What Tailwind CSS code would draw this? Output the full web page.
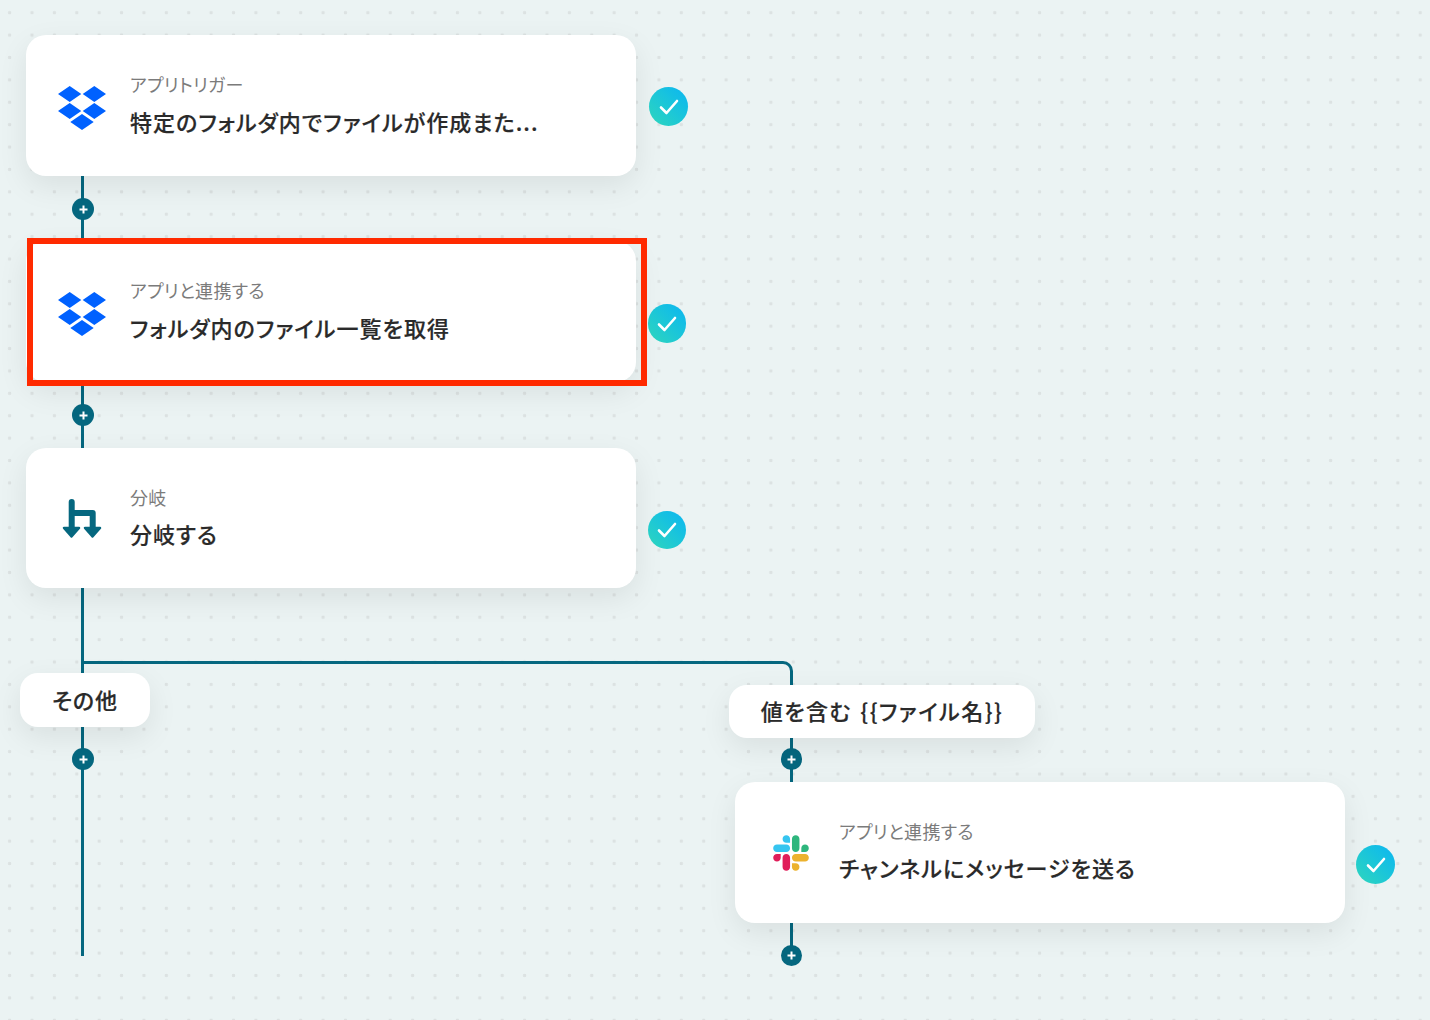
<!DOCTYPE html>
<html lang="ja">
<head>
<meta charset="utf-8">
<title>Flow</title>
<script src="https://cdn.jsdelivr.net/npm/@tailwindcss/browser@4"></script>
</head>
<body>
<main class="relative w-[1430px] h-[1020px] overflow-hidden bg-[#ebf3f3] bg-[radial-gradient(circle,#dce2e2_1.6px,transparent_2px)] bg-[size:22.4px_22.4px] bg-[position:-1.6px_1.5px] font-['Noto_Sans_CJK_JP','Noto_Sans',sans-serif] [font-feature-settings:'palt']">

  <!-- connectors -->
  <div class="absolute left-[81px] top-[176px] w-[3px] h-[62px] bg-[#05677f]"></div>
  <div class="absolute left-[81px] top-[386px] w-[3px] h-[62px] bg-[#05677f]"></div>
  <div class="absolute left-[81px] top-[588px] w-[3px] h-[368px] bg-[#05677f]"></div>
  <div class="absolute left-[83px] top-[661px] w-[710px] h-[30px] border-t-[3px] border-r-[3px] border-[#05677f] rounded-tr-[10px]"></div>
  <div class="absolute left-[790px] top-[738px] w-[3px] h-[44px] bg-[#05677f]"></div>
  <div class="absolute left-[790px] top-[923px] w-[3px] h-[24px] bg-[#05677f]"></div>

  <!-- plus buttons -->
  <div class="absolute left-[72px] top-[198px] w-[22px] h-[22px] rounded-full bg-[#05677f] flex items-center justify-center"><svg width="11" height="11" viewBox="0 0 11 11"><path d="M5.500 1.500v8M1.500 5.500h8" stroke="#fff" stroke-width="2"/></svg></div>
  <div class="absolute left-[72px] top-[404px] w-[22px] h-[22px] rounded-full bg-[#05677f] flex items-center justify-center"><svg width="11" height="11" viewBox="0 0 11 11"><path d="M5.500 1.500v8M1.500 5.500h8" stroke="#fff" stroke-width="2"/></svg></div>
  <div class="absolute left-[72px] top-[748px] w-[22px] h-[22px] rounded-full bg-[#05677f] flex items-center justify-center"><svg width="11" height="11" viewBox="0 0 11 11"><path d="M5.500 1.500v8M1.500 5.500h8" stroke="#fff" stroke-width="2"/></svg></div>
  <div class="absolute left-[781px] top-[748px] w-[21px] h-[22px] rounded-full bg-[#05677f] flex items-center justify-center"><svg width="11" height="11" viewBox="0 0 11 11"><path d="M5.500 1.500v8M1.500 5.500h8" stroke="#fff" stroke-width="2"/></svg></div>
  <div class="absolute left-[781px] top-[945px] w-[21px] h-[21px] rounded-full bg-[#05677f] flex items-center justify-center"><svg width="11" height="11" viewBox="0 0 11 11"><path d="M5.500 1.500v8M1.500 5.500h8" stroke="#fff" stroke-width="2"/></svg></div>

  <!-- node 1 -->
  <section class="absolute left-[26px] top-[35px] w-[610px] h-[141px] rounded-[20px] bg-white shadow-[0_10px_30px_rgba(0,0,0,0.08)] flex items-center pl-[32px]">
    <svg class="shrink-0 mt-[4px]" width="48" height="44" viewBox="0 0 48 44" fill="#0061ff"><path d="M0 8 11.700 0l11.600 8-11.600 8zM24.700 8 36.300 0 48 8l-11.700 8zM0 25l11.700-8 11.600 8-11.600 8zM24.700 25l11.600-8L48 25l-11.700 8z"/><path d="M12.300 36 24 28l11.700 8L24 44z" stroke="#fff" stroke-width="2" paint-order="stroke"/></svg>
    <div class="ml-[24px] mb-[4px] flex flex-col gap-[10px]">
      <p class="text-[18px] leading-[24px] tracking-[0.3px] text-[#7b7b7b]">アプリトリガー</p>
      <p class="text-[22px] leading-[30px] font-medium tracking-[1.05px] [-webkit-text-stroke:0.2px_#2a2a2a] text-[#2a2a2a]">特定のフォルダ内でファイルが作成また...</p>
    </div>
  </section>

  <!-- node 2 -->
  <section class="absolute left-[26px] top-[241px] w-[610px] h-[141px] rounded-[20px] bg-white shadow-[0_10px_30px_rgba(0,0,0,0.08)] flex items-center pl-[32px]">
    <svg class="shrink-0 mt-[4px]" width="48" height="44" viewBox="0 0 48 44" fill="#0061ff"><path d="M0 8 11.700 0l11.600 8-11.600 8zM24.700 8 36.300 0 48 8l-11.700 8zM0 25l11.700-8 11.600 8-11.600 8zM24.700 25l11.600-8L48 25l-11.700 8z"/><path d="M12.300 36 24 28l11.700 8L24 44z" stroke="#fff" stroke-width="2" paint-order="stroke"/></svg>
    <div class="ml-[24px] mb-[4px] flex flex-col gap-[10px]">
      <p class="text-[18px] leading-[24px] tracking-[0.3px] text-[#7b7b7b]">アプリと連携する</p>
      <p class="text-[22px] leading-[30px] font-medium tracking-[1.08px] [-webkit-text-stroke:0.2px_#2a2a2a] text-[#2a2a2a]">フォルダ内のファイル一覧を取得</p>
    </div>
  </section>
  <div class="absolute left-[27px] top-[238px] w-[620px] h-[148px] border-[6px] border-[#ff2a00]"></div>

  <!-- node 3 -->
  <section class="absolute left-[26px] top-[448px] w-[610px] h-[140px] rounded-[20px] bg-white shadow-[0_10px_30px_rgba(0,0,0,0.08)] flex items-center pl-[36px]">
    <svg class="shrink-0" width="40" height="42" viewBox="0 0 40 42" fill="none"><path d="M9.700 5v26M9.700 16h21v15" stroke="#05677f" stroke-width="6" stroke-linecap="round" stroke-linejoin="round"/><path d="M2 31h15l-7.500 8.500zM23 31h15l-7.500 8.500z" fill="#05677f" stroke="#05677f" stroke-width="2.500" stroke-linejoin="round"/></svg>
    <div class="ml-[28px] mb-[3px] flex flex-col gap-[9px]">
      <p class="text-[18px] leading-[24px] tracking-[0.3px] text-[#7b7b7b]">分岐</p>
      <p class="text-[22px] leading-[30px] font-medium tracking-[1px] [-webkit-text-stroke:0.2px_#2a2a2a] text-[#2a2a2a]">分岐する</p>
    </div>
  </section>

  <!-- branch pills -->
  <div class="absolute left-[20px] top-[673px] w-[130px] h-[54px] pb-[2px] rounded-[18px] bg-white shadow-[0_10px_30px_rgba(0,0,0,0.08)] flex items-center justify-center text-[22px] font-medium tracking-[0.8px] [-webkit-text-stroke:0.2px_#2a2a2a] text-[#2a2a2a]">その他</div>
  <div class="absolute left-[729px] top-[685px] w-[306px] h-[53px] pb-[2px] rounded-[18px] bg-white shadow-[0_10px_30px_rgba(0,0,0,0.08)] flex items-center justify-center text-[22px] font-medium tracking-[1.5px] [word-spacing:2px] [-webkit-text-stroke:0.2px_#2a2a2a] text-[#2a2a2a]">値を含む {{ファイル名}}</div>

  <!-- node 4 -->
  <section class="absolute left-[735px] top-[782px] w-[610px] h-[141px] rounded-[20px] bg-white shadow-[0_10px_30px_rgba(0,0,0,0.08)] flex items-center pl-[38px]">
    <svg class="shrink-0" width="36" height="36" viewBox="0 0 127 127"><path fill="#E01E5A" d="M27.200 80c0 7.300-5.900 13.200-13.200 13.200C6.700 93.200.8 87.300.8 80c0-7.300 5.900-13.200 13.200-13.200h13.200V80zm6.600 0c0-7.300 5.900-13.200 13.200-13.200 7.300 0 13.200 5.900 13.200 13.200v33c0 7.300-5.900 13.200-13.200 13.200-7.300 0-13.200-5.900-13.200-13.200V80z"/><path fill="#36C5F0" d="M47 27c-7.300 0-13.200-5.900-13.200-13.200C33.800 6.500 39.700.6 47 .6c7.300 0 13.200 5.900 13.200 13.200V27H47zm0 6.700c7.300 0 13.200 5.900 13.200 13.200 0 7.300-5.900 13.200-13.200 13.200H13.900C6.600 60.100.7 54.200.7 46.900c0-7.300 5.900-13.200 13.200-13.200H47z"/><path fill="#2EB67D" d="M99.900 46.900c0-7.300 5.900-13.200 13.200-13.200 7.300 0 13.200 5.900 13.200 13.200 0 7.300-5.900 13.200-13.200 13.200H99.900V46.900zm-6.600 0c0 7.300-5.900 13.200-13.200 13.200-7.300 0-13.200-5.900-13.200-13.200V13.800C66.900 6.500 72.800.6 80.100.6c7.300 0 13.200 5.900 13.200 13.200v33.100z"/><path fill="#ECB22E" d="M80.100 99.800c7.300 0 13.200 5.900 13.200 13.200 0 7.300-5.900 13.200-13.200 13.200-7.300 0-13.200-5.900-13.200-13.200V99.800h13.200zm0-6.600c-7.300 0-13.200-5.900-13.200-13.200 0-7.300 5.900-13.200 13.200-13.200h33.100c7.300 0 13.200 5.900 13.200 13.200 0 7.300-5.900 13.200-13.200 13.200H80.100z"/></svg>
    <div class="ml-[30px] mb-[4px] flex flex-col gap-[9px]">
      <p class="text-[18px] leading-[24px] tracking-[0.3px] text-[#7b7b7b]">アプリと連携する</p>
      <p class="text-[22px] leading-[30px] font-medium tracking-[1.05px] [-webkit-text-stroke:0.2px_#2a2a2a] text-[#2a2a2a]">チャンネルにメッセージを送る</p>
    </div>
  </section>

  <!-- status checks -->
  <div class="absolute left-[649px] top-[87px] w-[39px] h-[39px] rounded-full bg-gradient-to-tr from-[#2fd6bb] to-[#0db5f2] flex items-center justify-center"><svg width="20" height="16" viewBox="0 0 20 16" fill="none"><path d="M2 8.500 7.500 14 18 2" stroke="#fff" stroke-width="2.600" stroke-linecap="round" stroke-linejoin="round"/></svg></div>
  <div class="absolute left-[648px] top-[304px] w-[38px] h-[39px] rounded-full bg-gradient-to-tr from-[#2fd6bb] to-[#0db5f2] flex items-center justify-center"><svg width="20" height="16" viewBox="0 0 20 16" fill="none"><path d="M2 8.500 7.500 14 18 2" stroke="#fff" stroke-width="2.600" stroke-linecap="round" stroke-linejoin="round"/></svg></div>
  <div class="absolute left-[648px] top-[511px] w-[38px] h-[38px] rounded-full bg-gradient-to-tr from-[#2fd6bb] to-[#0db5f2] flex items-center justify-center"><svg width="20" height="16" viewBox="0 0 20 16" fill="none"><path d="M2 8.500 7.500 14 18 2" stroke="#fff" stroke-width="2.600" stroke-linecap="round" stroke-linejoin="round"/></svg></div>
  <div class="absolute left-[1356px] top-[845px] w-[39px] h-[39px] rounded-full bg-gradient-to-tr from-[#2fd6bb] to-[#0db5f2] flex items-center justify-center"><svg width="20" height="16" viewBox="0 0 20 16" fill="none"><path d="M2 8.500 7.500 14 18 2" stroke="#fff" stroke-width="2.600" stroke-linecap="round" stroke-linejoin="round"/></svg></div>
</main>
</body>
</html>
